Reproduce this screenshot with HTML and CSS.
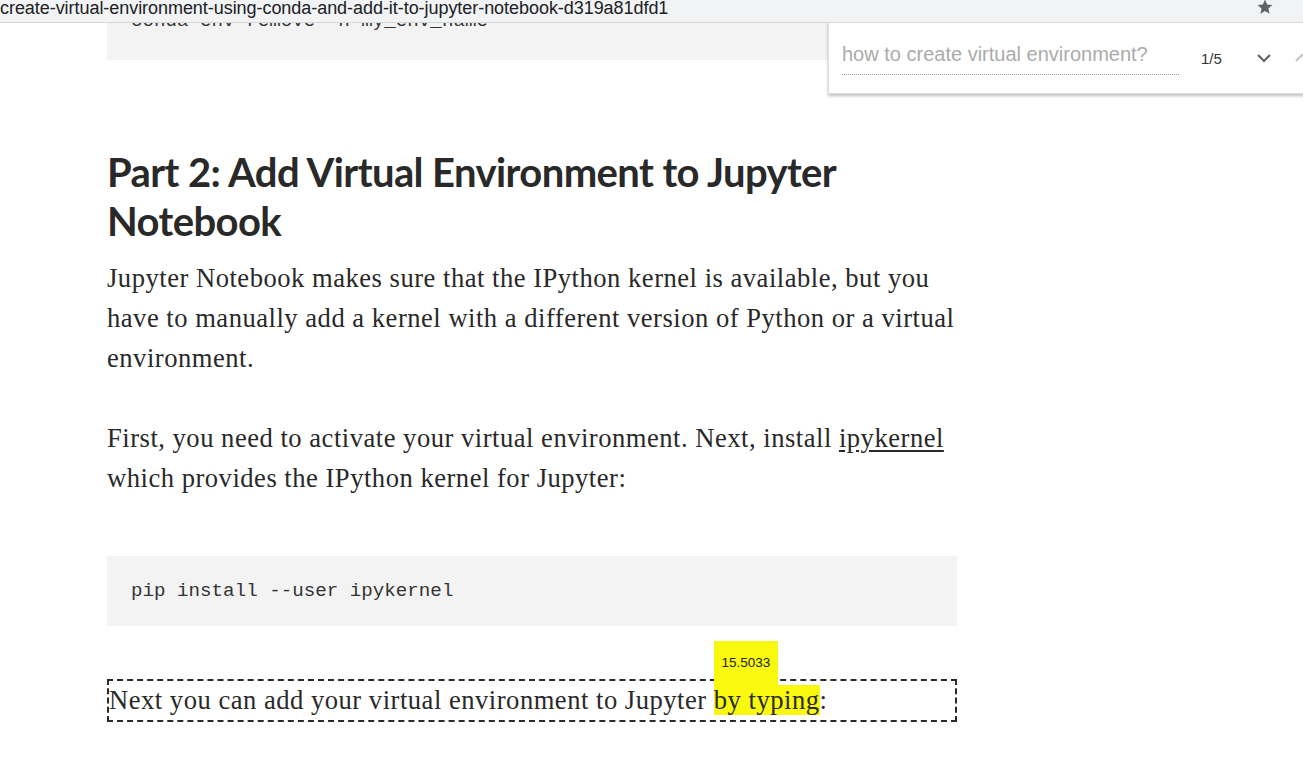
FILE: index.html
```html
<!DOCTYPE html>
<html>
<head>
<meta charset="utf-8">
<link rel="stylesheet" href="styles.css">
</head>
<body>
<div class="topbar">
  <div class="url">create-virtual-environment-using-conda-and-add-it-to-jupyter-notebook-d319a81dfd1</div>
  <svg class="star" width="18" height="18" viewBox="0 0 24 24"><path d="M12 17.27L18.18 21l-1.64-7.03L22 9.24l-7.19-.61L12 2 9.19 8.63 2 9.24l5.46 4.73L5.82 21z" fill="#5f6368"/></svg>
</div>
<div class="page">
  <article class="article">
    <pre class="code first">conda env remove -n my_env_name</pre>
    <h3 class="heading">Part 2: Add Virtual Environment to Jupyter Notebook</h3>
    <p class="para">Jupyter Notebook makes sure that the IPython kernel is available, but you have to manually add a kernel with a different version of Python or a virtual environment.</p>
    <p class="para">First, you need to activate your virtual environment. Next, install <a class="link" href="#">ipykernel</a> which provides the IPython kernel for Jupyter:</p>
    <pre class="code second">pip install --user ipykernel</pre>
    <p class="para boxed">Next you can add your virtual environment to Jupyter <span class="hl">by typing<span class="tag">15.5033</span></span>:</p>
  </article>
</div>
<div class="findbar">
  <div class="find-input">how to create virtual environment?</div>
  <div class="find-count">1/5</div>
  <svg class="chev" width="18" height="12" viewBox="0 0 18 12"><path d="M3 3l6 6 6-6" fill="none" stroke="#5f6368" stroke-width="2.2"/></svg>
  <svg class="chev up" width="18" height="12" viewBox="0 0 18 12"><path d="M3 9l6-6 6 6" fill="none" stroke="#c4c4c4" stroke-width="2"/></svg>
</div>
</body>
</html>
```
FILE: styles.css
```css
html, body {
  margin: 0;
  padding: 0;
  background: #fff;
  overflow: hidden;
}
body {
  width: 1303px;
  height: 760px;
  position: relative;
  font-family: "Liberation Serif", serif;
}
.topbar {
  height: 22px;
  background: #f1f3f4;
  border-bottom: 1px solid #d6d6d6;
  display: flex;
  align-items: center;
}
.url {
  font-family: "Liberation Sans", Arial, sans-serif;
  font-size: 18px;
  color: #202124;
  white-space: nowrap;
  margin-top: -6px;
  letter-spacing: -0.05px;
}
.star {
  margin-left: auto;
  margin-right: 29px;
  margin-top: -8px;
}
.page {
  height: 737px;
  overflow: hidden;
}
.article {
  width: 850px;
  margin-left: 107px;
  color: #292929;
}
.code {
  margin: 0;
  background: #f2f3f2;
  font-family: "Liberation Mono", "Courier New", monospace;
  font-size: 19.2px;
  line-height: 30px;
  padding: 20px 24px;
  color: #333;
}
.code.first {
  margin-top: -37px;
  padding-bottom: 24px;
}
.heading {
  font-family: Lato, "Open Sans", sans-serif;
  font-weight: 700;
  font-size: 40px;
  line-height: 49px;
  letter-spacing: -0.6px;
  margin: 88px 0 12px;
  color: #292929;
}
.para {
  font-size: 26.6px;
  line-height: 40px;
  letter-spacing: 0.5px;
  margin: 0 -12px 40px 0;
}
.link {
  color: #292929;
  text-decoration: underline;
  text-underline-offset: 3px;
}
.code.second {
  margin-top: 58px;
}
.boxed {
  margin: 53px 0 0;
  border: 2px dashed #2a2a2a;
  line-height: 39px;
}
.hl {
  position: relative;
  background: #f9f90f;
}
.tag {
  position: absolute;
  left: 0;
  bottom: 100%;
  width: 64px;
  height: 44px;
  background: #f9f90f;
  font-family: "Liberation Sans", Arial, sans-serif;
  font-size: 13.5px;
  letter-spacing: 0;
  line-height: 44px;
  text-align: center;
  color: #222;
}
.findbar {
  position: absolute;
  left: 828px;
  top: 22px;
  width: 490px;
  height: 72px;
  background: #fff;
  border: 1px solid #dcdcdc;
  box-shadow: 0 2px 3px rgba(0,0,0,0.25);
  display: flex;
  align-items: center;
  padding-left: 13px;
  box-sizing: border-box;
}
.find-input {
  width: 337px;
  font-family: "Liberation Sans", Arial, sans-serif;
  font-size: 20px;
  color: #ababab;
  padding-bottom: 8px;
  border-bottom: 1px dotted #9a9a9a;
  margin-top: 2px;
  white-space: nowrap;
}
.find-count {
  font-family: "Liberation Sans", Arial, sans-serif;
  font-size: 15px;
  color: #333;
  margin-left: 22px;
}
.chev {
  margin-left: 33px;
}
.chev.up {
  margin-left: 20px;
}
```
